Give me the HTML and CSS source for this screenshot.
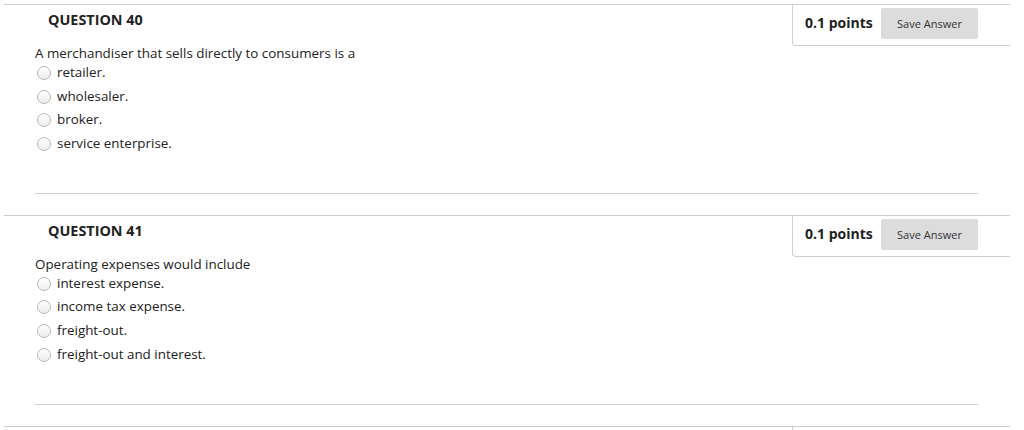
FILE: index.html
```html
<!DOCTYPE html>
<html lang="en">
<head>
<meta charset="utf-8">
<title>Quiz</title>
<link rel="stylesheet" href="styles.css">
</head>
<body>
<div class="page">
  <section class="question">
    <div class="points">
      <span class="points-label">0.1 points</span>
      <button class="save-btn" type="button">Save Answer</button>
    </div>
    <h2 class="q-title">QUESTION 40</h2>
    <div class="q-body">
      <p class="prompt">A merchandiser that sells directly to consumers is a</p>
      <ul class="options">
        <li class="option"><span class="radio"></span><span class="opt-text">retailer.</span></li>
        <li class="option"><span class="radio"></span><span class="opt-text">wholesaler.</span></li>
        <li class="option"><span class="radio"></span><span class="opt-text">broker.</span></li>
        <li class="option"><span class="radio"></span><span class="opt-text">service enterprise.</span></li>
      </ul>
      <div class="sep"></div>
    </div>
  </section>
  <section class="question">
    <div class="points">
      <span class="points-label">0.1 points</span>
      <button class="save-btn" type="button">Save Answer</button>
    </div>
    <h2 class="q-title">QUESTION 41</h2>
    <div class="q-body">
      <p class="prompt">Operating expenses would include</p>
      <ul class="options">
        <li class="option"><span class="radio"></span><span class="opt-text">interest expense.</span></li>
        <li class="option"><span class="radio"></span><span class="opt-text">income tax expense.</span></li>
        <li class="option"><span class="radio"></span><span class="opt-text">freight-out.</span></li>
        <li class="option"><span class="radio"></span><span class="opt-text">freight-out and interest.</span></li>
      </ul>
      <div class="sep"></div>
    </div>
  </section>
  <section class="question"><div class="points stub"></div></section>
</div>
</body>
</html>
```

FILE: styles.css
```css
html, body {
  margin: 0;
  padding: 0;
  background: #fff;
}
body {
  font-family: "Open Sans", "Noto Sans", sans-serif;
  color: #222;
  font-size: 13.4px;
}
.page {
  padding-top: 4px;
  padding-left: 4px;
}
.question {
  width: 1006px;
  border-top: 1px solid #cfcfcf;
  margin-bottom: 21px;
}
.points {
  float: right;
  width: 185px;
  height: 40px;
  padding-left: 12px;
  padding-right: 20px;
  display: flex;
  align-items: flex-start;
  border-left: 1px solid #cfcfcf;
  border-bottom: 1px solid #cfcfcf;
  border-bottom-left-radius: 4px;
}
.points.stub {
  height: 10px;
  border-bottom: none;
}
.points-label {
  font-weight: 700;
  font-size: 14px;
  line-height: 20px;
  margin-top: 8px;
  width: 76px;
  color: #222;
}
.save-btn {
  margin-top: 3px;
  width: 97px;
  height: 31px;
  border: none;
  border-radius: 2px;
  background: #dcdcdc;
  color: #333;
  font-family: "Open Sans", "Noto Sans", sans-serif;
  font-size: 11px;
  padding: 0;
}
.q-title {
  margin: 5px 0 0 44px;
  font-size: 14.4px;
  line-height: 20px;
  font-weight: 700;
  color: #222;
}
.q-body {
  margin-left: 31px;
}
.prompt {
  margin: 14px 0 1px 0;
  line-height: 18px;
}
.options {
  list-style: none;
  margin: 0;
  padding: 0 0 0 2px;
  display: flex;
  flex-direction: column;
  gap: 5.6px;
}
.option {
  display: flex;
  align-items: center;
  gap: 6px;
  height: 18px;
  line-height: 18px;
}
.radio {
  width: 14px;
  height: 14px;
  box-sizing: border-box;
  border-radius: 50%;
  border: 1px solid #b8b8b8;
  background: linear-gradient(#ffffff, #ededed);
  flex: none;
  margin-top: 2px;
}
.sep {
  margin-top: 41px;
  width: 943px;
  border-top: 1px solid #cfcfcf;
}
```
